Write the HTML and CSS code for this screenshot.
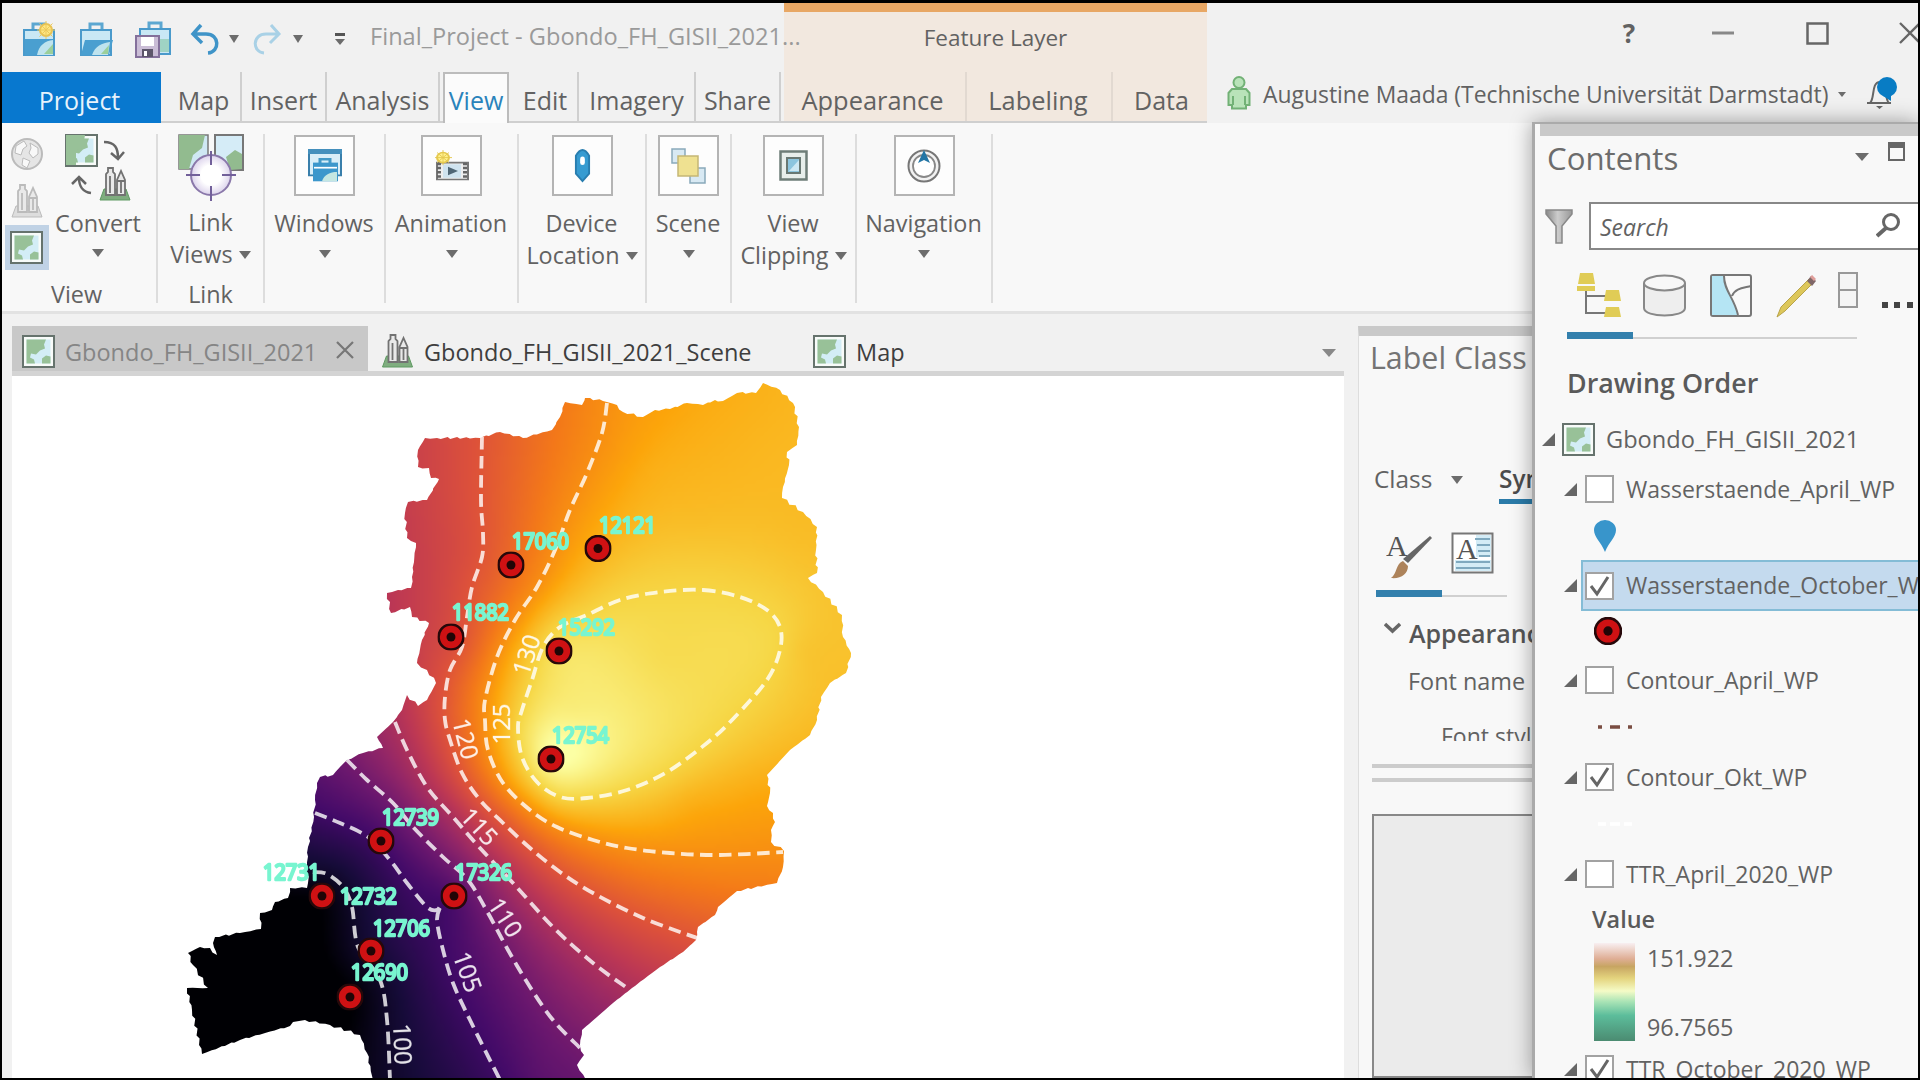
FILE: index.html
```html
<!DOCTYPE html>
<html lang="en">
<head>
<meta charset="utf-8">
<title>Final_Project - Gbondo_FH_GISII_2021</title>
<link rel="stylesheet" href="styles.css">
</head>
<body>
<svg class="defs" width="0" height="0" aria-hidden="true">
  <defs>
    <linearGradient id="grey" x1="0" x2="1"><stop offset="0" stop-color="#888"/><stop offset=".45" stop-color="#ccc"/><stop offset="1" stop-color="#999"/></linearGradient>
    <radialGradient id="lens"><stop offset=".5" stop-color="#fff"/><stop offset="1" stop-color="#dcd3ec"/></radialGradient>
    <symbol id="mapicon" viewBox="0 0 33 33">
      <rect x="1" y="1" width="31" height="31" fill="#f8fbf9" stroke="#66736d" stroke-width="2"/>
      <rect x="4.500" y="4.500" width="24" height="24" fill="#d3edf6"/>
      <path d="M4.500 4.500H24l-2 5 1 4-5 2-4 4-5-1-1 4 4 2 1 4H4.500zM20 28.500v-5l4-3 4.500 1v7z" fill="#98c198"/>
    </symbol>
    <symbol id="towers" viewBox="0 0 32 34">
      <path d="M5 22h22l4 11H1z" fill="var(--base,#7fad7f)" stroke="var(--rim,#5f9a62)"/>
      <path d="M7 28V7l2-2V1h5v4l2 2v21zM18 28V13l4-9 4 9v15zM18 14h8M11 9v17M22 15v11" fill="#e9e9e9" stroke="var(--line,#727272)" stroke-width="1.800"/>
    </symbol>
    <symbol id="case" viewBox="0 0 34 36">
      <path d="M11 10V3h12v7" fill="none" stroke="#5ca7d1" stroke-width="3"/>
      <rect x="2" y="9" width="30" height="25" fill="#c9e8f5" stroke="#4a9acb" stroke-width="2"/>
    </symbol>
    <symbol id="node" viewBox="0 0 26 26">
      <circle cx="13" cy="13" r="12" fill="#cf1113" stroke="#26080a" stroke-width="2.500"/>
      <circle cx="13" cy="13" r="4.300" fill="#210506"/>
    </symbol>
    <symbol id="tri" viewBox="0 0 13 13"><path d="M13 0v13H0z" fill="#666"/></symbol>
    <symbol id="check" viewBox="0 0 29 28"><path d="M6 14l6 8L23 5" fill="none" stroke="#666" stroke-width="3"/></symbol>
  </defs>
</svg>

<div class="app">
  <header class="head">
    <div class="head-left">
      <div class="quick">
        <svg class="q1" width="34" height="36" viewBox="0 0 34 36"><use href="#case"/><path d="M3 18h28v16H3z" fill="#4a9fd0"/><path d="M15 34c2-10 8-14 16-15v15z" fill="#bfe3ee"/><path d="M22 33l9-10v10z" fill="#9bcf9a"/><circle cx="24" cy="9" r="6" fill="#ffe680" stroke="#e8c253" stroke-width="2"/><path d="M24 0v18M15 9h18M17.500 2.500l13 13M30.500 2.500l-13 13" stroke="#ecc95c" stroke-width="1"/></svg>
        <svg class="q2" width="34" height="36" viewBox="0 0 34 36"><use href="#case"/><path d="M6 19h28l-4 15H2z" fill="#4a9fd0"/><path d="M13 34c3-9 10-12 18-13l-2 13z" fill="#bfe3ee"/><path d="M22 33l8-9-1 9z" fill="#9bcf9a"/></svg>
        <svg class="q3" width="37" height="38" viewBox="0 0 37 38"><svg x="3" width="34" height="36"><use href="#case"/></svg><path d="M25 19h9v13h-9z" fill="#9fd3c4"/><path d="M1 16h23v21H1z" fill="#cabdd6" stroke="#84709b" stroke-width="2"/><path d="M6 17h13v9H6z" fill="#fff"/><path d="M7 29h11v8H7z" fill="#5d566a"/><path d="M9 31h3v5H9z" fill="#fff"/></svg>
        <svg class="q4" width="30" height="32" viewBox="0 0 30 32"><path d="M11 2L3 11l9 9M4 11h12c14 0 14 18 2 19" fill="none" stroke="#3f94c8" stroke-width="3.500"/></svg>
        <i class="caret q5"></i>
        <svg class="q6" width="30" height="32" viewBox="0 0 30 32"><path d="M19 2l8 9-9 9M26 11H14c-14 0-14 18-2 19" fill="none" stroke="#a9d1e6" stroke-width="3"/></svg>
        <i class="caret q7"></i>
        <span class="custom"><i class="caret"></i></span>
        <span class="title">Final_Project - Gbondo_FH_GISII_2021...</span>
      </div>
      <nav class="tabs">
        <a class="project">Project</a><a class="t-map">Map</a><a class="t-ins">Insert</a><a class="t-ana">Analysis</a><a class="t-view">View</a><a class="t-edit">Edit</a><a class="t-img">Imagery</a><a class="t-share">Share</a>
      </nav>
    </div>
    <div class="context">
      <div class="context-name">Feature Layer</div>
      <nav class="context-tabs"><a>Appearance</a><a>Labeling</a><a>Data</a></nav>
    </div>
    <div class="head-right">
      <div class="window-buttons">
        <b>?</b>
        <svg width="22" height="22" viewBox="0 0 22 22"><path d="M0 11h22" stroke="#888" stroke-width="3"/></svg>
        <svg width="23" height="23" viewBox="0 0 23 23"><path d="M1.500 1.500h20v20h-20z" fill="none" stroke="#666" stroke-width="2.500"/></svg>
        <svg width="22" height="22" viewBox="0 0 22 22"><path d="M1 1l20 20M21 1L1 21" stroke="#666" stroke-width="2.300"/></svg>
      </div>
      <div class="account">
        <svg width="24" height="34" viewBox="0 0 24 34"><g fill="#b9e3b9" stroke="#72b176" stroke-width="2"><circle cx="12" cy="6.500" r="5.500"/><path d="M5 13h14l3.500 4v12H19v3.500H5V29H1.500V17zM6 20v9M18 20v9"/></g></svg>
        <span>Augustine Maada (Technische Universität Darmstadt)</span>
        <i class="caret small"></i>
        <svg width="33" height="34" viewBox="0 0 33 34"><path d="M1 27h24M4 27c5-4 1-21 10-21 8 0 4 17 9 21" fill="none" stroke="#666" stroke-width="2"/><path d="M10 30h7l-3.500 3z" fill="#666"/><circle cx="21" cy="11" r="10" fill="#087cc4"/><path d="M17 20h8v5z" fill="#087cc4"/></svg>
      </div>
    </div>
  </header>

  <section class="ribbon">
    <div class="group g-view">
      <div class="view-row">
        <div class="modes">
          <svg width="34" height="34" viewBox="0 0 34 34"><circle cx="17" cy="17" r="15" fill="#e5e5e5" stroke="#bbb" stroke-width="2"/><path d="M6 9l8-5 3 5-4 3-2 6-6-2zM20 6l8 5v6l-5 4-4-5 2-5zM13 21l7 3-3 7-5-3z" fill="#f8f8f8" stroke="#bbb"/></svg>
          <svg class="pale" width="32" height="34"><use href="#towers"/></svg>
          <span class="mode-on"><svg width="33" height="33"><use href="#mapicon"/></svg></span>
        </div>
        <div class="convert">
          <svg width="66" height="68" viewBox="0 0 66 68"><svg width="33" height="33"><use href="#mapicon"/><path d="M1 1h19l-2 12-7 4v14H1z" fill="#98c198"/></svg><path d="M39 8c11 0 14 6 14 16M46 19l7 6 6-7M26 59c-8-1-12-7-12-15M7 50l7-7 7 7" fill="none" stroke="#666" stroke-width="2.500"/><svg x="34" y="33" width="32" height="34"><use href="#towers"/></svg></svg>
          <span>Convert</span><i class="caret"></i>
        </div>
      </div>
      <span class="group-name">View</span>
    </div>
    <div class="group g-link">
      <svg width="66" height="68" viewBox="0 0 66 68"><path d="M1 1h29v34H1z" fill="#cfe8f3" stroke="#777" stroke-width="1.500"/><path d="M1 1h26l-3 13-9 7-4 14H1z" fill="#92bb8f"/><path d="M37 1h28v35H37z" fill="#d5ecf7" stroke="#777" stroke-width="2"/><path d="M52 36l-4-13 9-7 7 4v15z" fill="#92bb8f"/><circle cx="33" cy="41" r="20" fill="url(#lens)" stroke="#8a78aa" stroke-width="2"/><path d="M33 17v14M33 52v15M8 41h14M44 41h14" stroke="#72609a" stroke-width="2"/></svg>
      <span>Link</span><span>Views <i class="caret"></i></span><span class="group-name">Link</span>
    </div>
    <div class="group g-win"><div class="tile"><svg width="34" height="34" viewBox="0 0 34 40" preserveAspectRatio="none"><path d="M1 1h32v30H1z" fill="#d9eef8" stroke="#397fab" stroke-width="2"/><path d="M0 0h34v6H0z" fill="#4590bd"/><path d="M12 17v-5h10v5" fill="none" stroke="#4499c6" stroke-width="3"/><path d="M5 16h25v22H5z" fill="#3c97cc"/><path d="M6 22h23" stroke="#fff" stroke-width="2"/><path d="M14 38c2-8 8-11 15-11v11z" fill="#c5e7e2"/></svg></div><span>Windows</span><i class="caret"></i></div>
    <div class="group g-anim"><div class="tile"><svg width="34" height="32" viewBox="0 0 34 38" preserveAspectRatio="none"><path d="M2 15h31v20H2z" fill="#eee" stroke="#777" stroke-width="2"/><path d="M4 15v20M30 15v20" stroke="#666" stroke-width="4" stroke-dasharray="3 2"/><path d="M8 17h18v16H8z" fill="#cfe3ef"/><path d="M13 20l10 5-10 5z" fill="#4f6675"/><circle cx="8" cy="9" r="6" fill="#fff18c" stroke="#e5c84e" stroke-width="2"/><path d="M8 0v18M0 9h17M2 3l12 12M14 3L2 15" stroke="#e5c84e"/></svg></div><span>Animation</span><i class="caret"></i></div>
    <div class="group g-device"><div class="tile"><svg width="17" height="34" viewBox="0 0 18 36"><path d="M2 7q7-12 14 0v19l-7 8-7-8z" fill="#369bd1" stroke="#287daf" stroke-width="2"/><rect x="6.500" y="8" width="5" height="9" rx="2.500" fill="#fff"/></svg></div><span>Device</span><span>Location <i class="caret"></i></span></div>
    <div class="group g-scene"><div class="tile"><svg width="35" height="36" viewBox="0 0 35 36"><path d="M1 1h13v14H1zM19 20h15v15H19z" fill="#d8e9f3" stroke="#89a9bb" stroke-width="1.500"/><path d="M7 8h20v20H7z" fill="#efe191" stroke="#c5b675" stroke-width="1.500"/></svg></div><span>Scene</span><i class="caret"></i></div>
    <div class="group g-clip"><div class="tile"><svg width="29" height="31" viewBox="0 0 29 31"><path d="M1.500 1.500h26v28h-26z" fill="#e7eeeb" stroke="#6e7d78" stroke-width="2.500"/><path d="M8 8h13v15H8z" fill="#8cc5de" stroke="#687873" stroke-width="2"/><path d="M10 21l10-11v11z" fill="#cde8f3"/></svg></div><span>View</span><span>Clipping <i class="caret"></i></span></div>
    <div class="group g-nav"><div class="tile"><svg width="34" height="34" viewBox="0 0 34 34"><circle cx="17" cy="17" r="15.500" fill="#f2f2f2" stroke="#777" stroke-width="2"/><circle cx="17" cy="17" r="11" fill="#fff" stroke="#888" stroke-width="1.800"/><path d="M17 1l6 13-6-3-6 3z" fill="#2375a5"/></svg></div><span>Navigation</span><i class="caret"></i></div>
  </section>

  <main class="work">
    <section class="documents">
      <div class="doc-tabs">
        <div class="doc active"><svg width="33" height="33"><use href="#mapicon"/></svg><span>Gbondo_FH_GISII_2021</span><svg class="close" width="18" height="18" viewBox="0 0 18 18"><path d="M1 1l16 16M17 1L1 17" stroke="#777" stroke-width="2.200"/></svg></div>
        <div class="doc scene"><svg width="33" height="34"><use href="#towers"/></svg><span>Gbondo_FH_GISII_2021_Scene</span></div>
        <div class="doc plain"><svg width="33" height="33"><use href="#mapicon"/></svg><span>Map</span></div>
        <i class="caret wide"></i>
      </div>
      <div class="map">
        <canvas id="surface" width="1332" height="702"></canvas>
        <svg class="layers" width="1332" height="702" viewBox="12 376 1332 702">
          <g id="contours" class="contours"></g>
          <g class="levels">
            <text transform="translate(527 655) rotate(-72)" y="8">130</text>
            <text transform="translate(502 724) rotate(-90)" y="8">125</text>
            <text transform="translate(465 739) rotate(76)" y="8">120</text>
            <text transform="translate(479 827) rotate(47)" y="8">115</text>
            <text transform="translate(505 918) rotate(57)" y="8">110</text>
            <text transform="translate(467 972) rotate(70)" y="8">105</text>
            <text transform="translate(402 1044) rotate(88)" y="8">100</text>
          </g>
          <g id="wells" class="wells"></g>
        </svg>
      </div>
    </section>

    <aside class="label-pane">
      <h2>Label Class</h2>
      <div class="label-tabs"><span>Class <i class="caret"></i></span><b>Symbol</b></div>
      <div class="label-icons">
        <svg width="48" height="50" viewBox="0 0 48 50"><text x="0" y="24" class="serif-a">A</text><path d="M46 6L22 31l-5-4L44 4z" fill="#666"/><path d="M17 29l5 5c0 8-7 13-17 12 6-4 5-15 12-17z" fill="#ad835b"/></svg>
        <svg width="43" height="42" viewBox="0 0 43 42"><path d="M1.500 1.500h40v39h-40z" fill="#fff" stroke="#777" stroke-width="2"/><path d="M25 3h15v22H25zM4 28h36v11H4z" fill="#d4ecf6"/><path d="M24 7h15M26 13h13M27 19h12M28 24h11M5 30h34M5 36h34" stroke="#7fa9bf" stroke-width="1.800"/><text x="5" y="27" class="serif-a">A</text></svg>
      </div>
      <div class="rule"><i></i></div>
      <div class="appearance"><svg width="17" height="12" viewBox="0 0 17 12"><path d="M1 2l7.500 7L16 2" fill="none" stroke="#666" stroke-width="3.500"/></svg><b>Appearance</b></div>
      <div class="font-name">Font name</div>
      <div class="font-style">Font style</div>
      <div class="splitter"></div>
      <div class="preview"></div>
    </aside>
  </main>

  <aside class="contents">
    <div class="grip"></div>
    <div class="contents-head"><h2>Contents</h2><i class="caret wide"></i><svg width="17" height="19" viewBox="0 0 17 19"><path d="M1 1h15v17H1z" fill="none" stroke="#666" stroke-width="2"/><path d="M0 0h17v6H0z" fill="#666"/></svg></div>
    <div class="find">
      <svg width="28" height="35" viewBox="0 0 28 35"><path d="M1 1h26v4L17 17v17h-6V17L1 5z" fill="url(#grey)" stroke="#888" stroke-width="1.500"/></svg>
      <div class="search"><em>Search</em><svg width="25" height="25" viewBox="0 0 25 25"><circle cx="15" cy="9" r="7.500" fill="none" stroke="#666" stroke-width="3"/><path d="M10 15l-9 8" stroke="#666" stroke-width="4"/></svg></div>
    </div>
    <div class="modes-bar">
      <svg width="46" height="46" viewBox="0 0 46 46"><path d="M9 16v25h20M9 24h20" fill="none" stroke="#777" stroke-width="2"/><path d="M3 1h13l2 11H1zM0 14h18v5H0zM29 18h13l2 11H27zM29 35h13l2 10H27z" fill="#e0cc56"/></svg>
      <svg width="43" height="43" viewBox="0 0 43 43"><path d="M1 9v25c0 10 41 10 41 0V9" fill="#eee" stroke="#888" stroke-width="2"/><ellipse cx="21.500" cy="9" rx="20.500" ry="7.500" fill="#f7f7f7" stroke="#888" stroke-width="2"/></svg>
      <svg width="42" height="43" viewBox="0 0 42 43"><rect x="1" y="1" width="40" height="41" rx="2" fill="#f9f9f9" stroke="#777" stroke-width="2"/><path d="M2 2h12c0 15 10 21 14 39H2z" fill="#b5e5f4"/><path d="M14 2c0 15 10 21 14 39M22 22c3-8 12-8 19-10" fill="none" stroke="#777" stroke-width="2"/></svg>
      <svg width="40" height="44" viewBox="0 0 40 44"><path d="M33 4l4 4L9 36l-8 6 4-10z" fill="#ddc75a" stroke="#b8a34a"/><path d="M31 6l4-5 5 5-4 5z" fill="#7f6768"/><path d="M35 1l4 4" stroke="#df9e9a" stroke-width="3"/></svg>
      <svg width="20" height="36" viewBox="0 0 20 36"><path d="M1 1h18v34H1zM1 18h18" fill="#f5f5f5" stroke="#999" stroke-width="2"/></svg>
      <svg class="dots" width="33" height="6" viewBox="0 0 33 6"><path d="M0 0h6v6H0zM12 0h6v6h-6zM25 0h6v6h-6z" fill="#444"/></svg>
    </div>
    <div class="rule"><i></i></div>
    <h3>Drawing Order</h3>
    <div class="tree">
      <div class="row root"><svg width="13" height="13"><use href="#tri"/></svg><svg width="33" height="33"><use href="#mapicon"/></svg><span>Gbondo_FH_GISII_2021</span></div>
      <div class="row"><svg width="13" height="13"><use href="#tri"/></svg><i class="box"></i><span>Wasserstaende_April_WP</span></div>
      <div class="symbol s-pin"><svg width="22" height="32" viewBox="0 0 22 32"><path d="M11 32C7 22 0 17 0 10a11 10 0 0 1 22 0c0 7-7 12-11 22z" fill="#3895cb"/></svg></div>
      <div class="row selected"><svg width="13" height="13"><use href="#tri"/></svg><div class="hit"><i class="box"><svg width="29" height="28"><use href="#check"/></svg></i><span>Wasserstaende_October_WP</span></div></div>
      <div class="symbol s-dot"><svg width="28" height="28"><use href="#node"/></svg></div>
      <div class="row"><svg width="13" height="13"><use href="#tri"/></svg><i class="box"></i><span>Contour_April_WP</span></div>
      <div class="symbol s-line"><svg width="34" height="4" viewBox="0 0 34 4"><path d="M0 2h4M12 2h10M30 2h4" stroke="#7a4d42" stroke-width="3.500"/></svg></div>
      <div class="row"><svg width="13" height="13"><use href="#tri"/></svg><i class="box"><svg width="29" height="28"><use href="#check"/></svg></i><span>Contour_Okt_WP</span></div>
      <div class="symbol s-line"><svg width="34" height="4" viewBox="0 0 34 4"><path d="M0 2h8M12 2h10M26 2h8" stroke="#fff" stroke-width="3.500"/></svg></div>
      <div class="row"><svg width="13" height="13"><use href="#tri"/></svg><i class="box"></i><span>TTR_April_2020_WP</span></div>
      <b class="value">Value</b>
      <div class="legend"><i class="ramp"></i><div><span>151.922</span><span>96.7565</span></div></div>
      <div class="row last"><svg width="13" height="13"><use href="#tri"/></svg><i class="box"><svg width="29" height="28"><use href="#check"/></svg></i><span>TTR_October_2020_WP</span></div>
    </div>
  </aside>
</div>
<script src="map.js"></script>
</body>
</html>
```
FILE: styles.css
```css
* { box-sizing: border-box; }
html, body { height: 100%; }
body { margin: 0; background: #000; overflow: hidden; color: #626262; font: 23px/30px "Open Sans", "Noto Sans", sans-serif; white-space: nowrap; }
svg { display: block; flex: none; }
.defs { position: absolute; }
h2, h3 { margin: 0; font-weight: 400; }
.app { position: relative; width: 1916px; height: 1075px; margin: 3px 2px 2px; background: #f1f1f1; overflow: hidden; display: flex; flex-direction: column; }
.caret { display: inline-block; flex: none; width: 0; height: 0; border: 6px solid transparent; border-top: 8px solid #6c6c6c; border-bottom: 0; vertical-align: 4px; }
.caret.wide { border-width: 8px 7px 0; }
.caret.small { border-width: 5px 4px 0; }

.head { display: grid; grid-template-columns: 782px 423px 1fr; height: 120px; flex: none; border-bottom: 2px solid #cfcfcf; }
.head-left { display: grid; grid-template-rows: 69px 51px; z-index: 1; }
.quick { display: flex; align-items: center; padding: 3px 0 0 20px; }
.q2 { margin-left: 23px; } .q3 { margin-left: 22px; } .q4 { margin-left: 18px; } .q5 { margin-left: 9px; } .q6 { margin-left: 13px; } .q7 { margin-left: 11px; }
.caret.q5, .caret.q7 { border-left-width: 5px; border-right-width: 5px; }
.custom { margin-left: 32px; padding-top: 3px; border-top: 3px solid #555; display: flex; }
.custom .caret { border-width: 6px 5px 0; }
.title { margin: -7px 0 0 25px; color: #9a9a9a; font-size: 23.6px; }
.tabs { display: flex; }
.tabs a, .context-tabs a { display: flex; justify-content: center; align-items: center; padding-top: 8px; border-right: 2px solid #cfcfcf; font-size: 25px; height: 49px; padding-bottom: 2px; }
.tabs a { flex: none; }
.tabs .project { width: 159px; background: #0878cf; color: #e7f3fc; border: 0; height: 51px; padding: 9px 4px 5px 0; }
.tabs .t-map { width: 81px; padding-left: 6px; } .t-ins { width: 85px; } .t-ana { width: 113px; }
.tabs .t-view { width: 66px; margin: 0 4px 0 3px; background: #fbfbfb; border: 2px solid #bcbcbc; border-bottom: 0; height: 51px; padding: 6px 0 4px; color: #2a83bb; }
.t-edit { width: 66px; } .t-img { width: 117px; } .t-share { width: 85px; }
.context { background: #f2e8df; border-top: 9px solid #e8a764; display: flex; flex-direction: column; height: 118px; }
.context-name { height: 60px; padding-top: 11px; text-align: center; font-size: 22.5px; }
.context-tabs { display: grid; grid-template-columns: 183px 146px 1fr; }
.context-tabs a { border-color: #e2d9d1; }
.context-tabs a:first-child { padding-right: 4px; font-size: 25.4px; }
.context-tabs a:nth-child(2) { font-size: 25.4px; padding-right: 2px; }
.context-tabs a:last-child { border: 0; padding-left: 3px; }
.head-right { display: grid; grid-template-rows: 62px 56px; background: #f1f1f1; }
.window-buttons { display: flex; align-items: center; padding: 0 0 2px 414px; }
.window-buttons b { width: 16px; font-size: 26px; text-align: center; margin-right: 75px; }
.window-buttons svg + svg { margin-left: 72px; }
.window-buttons svg:last-child { margin-left: 70px; }
.account { display: flex; align-items: center; padding-left: 20px; }
.account span { margin: 3px 10px 0 12px; width: 565px; font-size: 22.9px; }
.account .caret { margin-top: 2px; }
.account svg:last-child { margin-left: 20px; }

.ribbon { height: 191px; flex: none; display: flex; padding-top: 11px; background: #f8f8f8; border-bottom: 3px solid #e2e2e2; font-size: 23.4px; }
.group { height: 169px; border-right: 2px solid #ddd; display: flex; flex-direction: column; align-items: center; flex: none; }
.g-view { width: 156px; } .g-link { width: 107px; } .g-win { width: 121px; } .g-anim { width: 133px; } .g-device { width: 128px; } .g-scene { width: 85px; } .g-clip { width: 125px; } .g-nav { width: 136px; }
.group > span { height: 32px; line-height: 32px; }
.g-link > svg { margin-bottom: 4px; }
.group > .group-name { margin-top: 8px; }
.group > .caret, .convert > .caret { margin-top: 11px; }
.tile { width: 61px; height: 61px; margin: 1px 0 11px; border: 2px solid #b4b4b4; background: #fdfdfd; display: grid; place-items: center; flex: none; }
.group > .tile + span { margin-left: -1px; }
.view-row { width: 100%; display: flex; height: 136px; }
.modes { width: 49px; display: flex; flex-direction: column; align-items: center; gap: 13px; padding-top: 3px; flex: none; }
.pale { --base: #ddd; --rim: #bbb; --line: #bbb; }
.mode-on { width: 44px; height: 45px; margin-top: -6px; background: #c0d2e5; display: grid; place-items: center; flex: none; }
.convert { width: 94px; display: flex; flex-direction: column; align-items: center; line-height: 34px; }
.convert svg { margin-bottom: 4px; } .convert > svg { height: 68px; }
.convert > span { height: 32px; }
.g-view > .group-name { margin: 8px 5px 0 0; }

.work { flex: 1; display: flex; min-height: 0; }
.documents { width: 1342px; flex: none; padding: 12px 0 0 10px; }
.doc-tabs { height: 50px; display: flex; border-bottom: 5px solid #d4d4d4; font-size: 23.5px; }
.doc { display: flex; align-items: center; padding-top: 5px; color: #3e3e3e; }
.doc.active { width: 356px; background: #c8c8c8; color: #858585; padding-left: 10px; }
.doc span { margin: 2px 0 0 10px; }
.doc .close { margin: -3px 0 0 19px; }
.doc.scene { width: 445px; padding-left: 13px; } .doc.plain { width: 509px; }
.doc-tabs .caret { margin-top: 23px; border-top-color: #888; }
.map { position: relative; height: 702px; background: #fff; }
.map canvas { display: block; }
.layers { position: absolute; inset: 0; }
.contours { fill: none; stroke: #fff; stroke-opacity: .8; stroke-width: 3.800; stroke-dasharray: 12.500 6.500; }
.levels text { font: 24px "Open Sans", sans-serif; text-anchor: middle; fill: #fff; fill-opacity: .88; stroke: #fff; stroke-opacity: .4; stroke-width: .7; }
.wells text { font: 22px "Open Sans", sans-serif; fill: #78f5d0; stroke: #78f5d0; stroke-width: 2.600; stroke-linejoin: round; }

.label-pane { margin: 12px 0 0 14px; border-left: 1px solid #ddd; border-top: 10px solid #c9c9c9; background: #f8f8f8; flex: 1; padding-left: 13px; display: flex; flex-direction: column; }
.label-pane h2 { font-size: 30.4px; height: 124px; padding-top: 7px; margin-left: -2px; color: #747474; flex: none; }
.label-tabs { display: flex; height: 46px; line-height: 38px; padding-left: 2px; font-size: 24.4px; flex: none; }
.label-tabs span { width: 125px; } .label-tabs .caret { margin-left: 12px; }
.label-tabs b { color: #4c4c4c; font-weight: 600; height: 44px; border-bottom: 5px solid #2b7ba9; }
.label-icons { display: flex; gap: 17px; height: 84px; padding: 26px 0 0 14px; flex: none; }
.serif-a { font: 30px "Liberation Serif", serif; fill: #555; }
.rule { height: 7px; border-bottom: 2px solid #d0d0d0; flex: none; }
.rule i { display: block; height: 7px; width: 66px; background: #3380ad; }
.label-pane .rule { width: 131px; margin-left: 4px; }
.appearance { display: flex; height: 72px; padding: 23px 0 0 12px; gap: 8px; line-height: 26px; flex: none; }
.appearance svg { margin-top: 2px; }
.appearance b { font-weight: 600; color: #555; font-size: 25px; }
.font-name { padding-left: 36px; height: 54px; flex: none; line-height: 24px; font-size: 23.4px; }
.font-style { padding-left: 69px; height: 18px; flex: none; line-height: 27px; overflow: hidden; }
.splitter { height: 18px; margin-top: 23px; border: solid #ccc; border-width: 4px 0; flex: none; }
.preview { margin-top: 32px; flex: 1; background: #ebebeb; border: 2px solid #888; }

.contents { position: absolute; left: 1530px; top: 119px; width: 386px; height: 956px; background: #f8f8f8; border-left: 3px solid #aaa; border-top: 2px solid #aaa; box-shadow: 0 0 20px rgba(0,0,0,.36); padding-left: 3px; }
.grip { height: 12px; margin-left: 2px; background: #c9c9c9; }
.contents-head { display: flex; height: 66px; padding: 5px 0 0 9px; }
.contents-head h2 { width: 308px; font-size: 31.2px; line-height: 34px; color: #6c6c6c; }
.contents-head .caret { margin-top: 12px; }
.contents-head svg { margin-left: 19px; margin-top: 1px; }
.find { display: flex; align-items: center; height: 48px; padding-left: 7px; }
.search { margin-left: 16px; flex: 1; height: 48px; background: #fff; border: 2px solid #888; border-right: 0; display: flex; justify-content: space-between; align-items: center; padding: 2px 17px 0 9px; }
.search svg { margin-top: -4px; }
.modes-bar { display: flex; height: 82px; padding: 22px 0 0 39px; }
.modes-bar svg:nth-child(2) { margin: 2px 0 0 20px; } .modes-bar svg:nth-child(3) { margin: 2px 0 0 24px; } .modes-bar svg:nth-child(4) { margin: 3px 0 0 24px; } .modes-bar svg:nth-child(5) { margin-left: 22px; }
.modes-bar .dots { margin: 30px 0 0 24px; }
.contents .rule { width: 290px; margin-left: 29px; }
.contents h3 { padding: 29px 0 0 29px; height: 79px; font-weight: 600; font-size: 26.8px; color: #5a5a5a; line-height: 30px; }
.tree { padding-left: 26px; display: flex; flex-direction: column; }
.row { display: flex; align-items: center; height: 46px; flex: none; }
.row > svg:first-child { margin-right: 8px; }
.row.root { margin: 0 0 5px -22px; height: 43px; font-size: 23.6px; }
.root svg + svg { margin-right: 11px; margin-left: -1px; }
.box { width: 29px; height: 28px; border: 2px solid #a2a2a2; background: #fff; margin-right: 12px; flex: none; }
.box svg { margin: -2px; }
.row span { margin-top: -1px; }
.symbol { height: 48px; flex: none; padding-left: 30px; }
.s-pin { padding-top: 8px; height: 48px; }
.row.selected { height: 51px; }
.row.selected > svg { margin-right: 4px; }
.hit { display: flex; align-items: center; align-self: stretch; flex: 1; background: #c4daee; border: 2px solid #84bcd6; border-right: 0; padding-left: 2px; overflow: hidden; }
.s-dot { padding-top: 6px; height: 46px; } .s-line { height: 51px; padding: 22px 0 0 34px; }
.value { height: 46px; font-weight: 600; color: #5a5a5a; padding: 7px 0 0 28px; flex: none; font-size: 23.4px; }
.legend { display: flex; height: 103px; padding-left: 30px; flex: none; }
.ramp { width: 41px; height: 98px; background: linear-gradient(#f8eff1, #dfae95 16%, #c7a562 24%, #e4d47e 36%, #f5fbc7 49%, #a8e3b5 60%, #5cbd9b 74%, #4b8b71); }
.legend div { display: flex; flex-direction: column; justify-content: space-between; height: 99px; margin-left: 12px; font-size: 23.4px; }
```
FILE: map.js
```js
const LEFT = 12, TOP = 376;
const BASIN = [[425,438],[418,450],[418,467],[429,468],[431,478],[439,479],[427,500],[408,502],[405,513],[407,538],[416,543],[412,577],[411,588],[398,590],[387,593],[391,613],[410,607],[412,617],[429,623],[422,640],[417,663],[427,670],[436,683],[427,700],[418,706],[407,695],[402,710],[393,722],[377,737],[383,748],[363,753],[347,760],[340,767],[333,775],[320,777],[317,783],[315,800],[314,817],[308,847],[307,867],[308,883],[307,888],[290,888],[288,898],[275,902],[272,910],[260,913],[261,929],[240,933],[215,937],[213,943],[217,955],[210,948],[200,947],[188,953],[193,965],[208,988],[187,988],[192,1010],[202,1054],[240,1040],[290,1026],[293,1022],[305,1020],[330,1025],[360,1035],[367,1053],[373,1080],[586,1080],[577,1065],[584,1055],[580,1045],[582,1030],[597,1017],[613,1003],[632,988],[660,967],[683,952],[696,940],[698,927],[715,915],[718,907],[737,891],[777,883],[783,867],[784,851],[771,842],[771,830],[775,822],[773,813],[767,806],[770,793],[767,775],[790,750],[810,735],[817,720],[821,697],[830,683],[846,673],[851,653],[843,637],[842,615],[823,592],[808,578],[817,573],[816,550],[817,527],[803,512],[782,498],[783,487],[789,465],[787,452],[797,445],[799,427],[793,403],[780,390],[763,383],[756,393],[737,393],[723,401],[715,400],[703,405],[687,403],[670,409],[655,410],[643,417],[623,412],[617,405],[603,401],[585,398],[582,405],[565,402],[560,417],[552,430],[523,438],[500,432],[480,438],[437,438]];
const LINES = [
  { v: 130, closed: true, p: [[703,590],[740,597],[767,610],[780,627],[780,650],[767,680],[733,719],[707,743],[667,772],[627,790],[587,798],[560,797],[537,782],[522,757],[518,727],[522,710],[532,680],[543,647],[560,627],[587,615],[620,600],[660,592]] },
  { v: 125, p: [[607,403],[602,433],[587,473],[570,510],[555,550],[537,587],[515,620],[497,657],[485,700],[485,720],[488,750],[503,783],[530,810],[557,827],[593,840],[627,848],[670,853],[720,855],[783,852]] },
  { v: 120, p: [[482,437],[481,500],[483,533],[482,557],[472,587],[467,617],[462,647],[450,670],[445,697],[445,720],[450,740],[462,773],[480,800],[503,823],[530,848],[560,872],[593,893],[643,918],[697,938]] },
  { v: 115, p: [[395,722],[407,750],[427,787],[453,817],[480,848],[513,883],[553,927],[593,963],[630,990]] },
  { v: 110, p: [[347,760],[367,780],[393,803],[413,827],[443,857],[468,880],[488,913],[508,950],[530,987],[553,1020],[580,1048]] },
  { v: 105, p: [[315,813],[340,823],[368,837],[390,860],[407,883],[427,907],[437,910],[441,905],[437,920],[443,950],[453,983],[470,1020],[500,1080]] },
  { v: 100, p: [[313,872],[327,874],[343,887],[352,907],[358,947],[380,980],[387,1020],[390,1080]] }
];
const SPOTS = [[551,757,134.6],[575,715,132.8],[598,680,132.2],[559,651,131.3],[660,660,130.8],[800,650,129],[846,655,128.6],[770,450,127.8],[770,400,127.5],[680,420,126.8],[800,540,128.3],[700,520,128.2],[650,470,127.1],[755,790,126.9],[690,800,127.4],[410,515,117.3],[395,602,116.4],[425,450,118],[430,650,118.2],[322,896,97.5],[350,997,96.8],[260,960,95],[200,970,94],[215,1040,94],[300,1000,95.5],[580,1068,109.2],[540,1078,107.7],[440,1078,102.2]];
const WELLS = [[598,548.5,'12121',599,533],[511,565,'17060',512,549],[451,637,'11882',452,620],[559,651,'15292',558,635],[551,759,'12754',552,743],[381,841,'12739',382,825],[322,896,'12731',263,880],[454,896,'17326',455,880],[371,951,'12706',373,936],[350,997,'12690',351,980]];
const RAMP = [[0,0,4],[22,11,57],[66,10,104],[106,23,110],[147,38,103],[188,55,84],[221,81,58],[243,120,25],[252,165,10],[246,215,70],[252,255,164]];
const STOPS = [[97,0],[100,.07],[105,.19],[110,.32],[115,.46],[120,.61],[125,.75],[127,.815],[130,.895],[132,.94],[134.5,1]];

// Catmull-Rom curve through the vertices
function curve(p, closed) {
  const n = p.length, at = i => closed ? p[(i + n) % n] : p[Math.max(0, Math.min(n - 1, i))];
  let d = `M${p[0]}`;
  for (let i = 0; i < (closed ? n : n - 1); i++) {
    const a = at(i - 1), b = at(i), c = at(i + 1), e = at(i + 2);
    d += `C${b[0] + (c[0] - a[0]) / 6},${b[1] + (c[1] - a[1]) / 6} ${c[0] - (e[0] - b[0]) / 6},${c[1] - (e[1] - b[1]) / 6} ${c}`;
  }
  return d;
}
document.getElementById('contours').innerHTML = LINES.map(l => `<path d="${curve(l.p, l.closed)}"/>`).join('');
document.getElementById('wells').innerHTML =
  WELLS.map(w => `<use href="#node" x="${w[0] - 13.5}" y="${w[1] - 13.5}" width="27" height="27"/>`).join('') +
  [...WELLS, [0, 0, '12732', 340, 904]].map(w => `<text x="${w[3]}" y="${w[4]}" textLength="57" lengthAdjust="spacingAndGlyphs">${w[2]}</text>`).join('');

// Thin-plate spline through contour vertices and spot values
const S = 100, pts = [...SPOTS.map(s => [s[0] / S, s[1] / S, s[2]])];
for (const l of LINES) for (const q of l.p) pts.push([q[0] / S, q[1] / S, l.v]);
const n = pts.length, N = n + 3, M = [];
const U = r2 => r2 > 0 ? r2 * Math.log(r2) : 0;
for (let i = 0; i < n; i++) {
  const row = pts.map(q => U((pts[i][0] - q[0]) ** 2 + (pts[i][1] - q[1]) ** 2));
  row[i] += .012;
  M.push([...row, 1, pts[i][0], pts[i][1], pts[i][2]]);
}
M.push([...pts.map(() => 1), 0, 0, 0, 0], [...pts.map(q => q[0]), 0, 0, 0, 0], [...pts.map(q => q[1]), 0, 0, 0, 0]);
for (let c = 0; c < N; c++) {
  let b = c;
  for (let r = c + 1; r < N; r++) if (Math.abs(M[r][c]) > Math.abs(M[b][c])) b = r;
  [M[c], M[b]] = [M[b], M[c]];
  for (let r = 0; r < N; r++) {
    if (r === c) continue;
    const f = M[r][c] / M[c][c];
    for (let k = c; k <= N; k++) M[r][k] -= f * M[c][k];
  }
}
const W = M.map((r, i) => r[N] / r[i]);
function height(x, y) {
  x /= S; y /= S;
  let v = W[n] + W[n + 1] * x + W[n + 2] * y;
  for (let i = 0; i < n; i++) v += W[i] * U((x - pts[i][0]) ** 2 + (y - pts[i][1]) ** 2);
  return v;
}
function colour(v) {
  let t = v <= 97 ? 0 : 1;
  for (let i = 1; i < STOPS.length; i++) if (v > STOPS[i - 1][0] && v <= STOPS[i][0])
    t = STOPS[i - 1][1] + (v - STOPS[i - 1][0]) / (STOPS[i][0] - STOPS[i - 1][0]) * (STOPS[i][1] - STOPS[i - 1][1]);
  const k = Math.min(9, Math.floor(t * 10)), f = t * 10 - k;
  return RAMP[k].map((c, j) => c + (RAMP[k + 1][j] - c) * f);
}
const step = 4, x0 = 180, y0 = 376, gw = 172, gh = 177;
const cell = document.createElement('canvas');
cell.width = gw; cell.height = gh;
const cg = cell.getContext('2d'), img = cg.createImageData(gw, gh);
for (let j = 0; j < gh; j++) for (let i = 0; i < gw; i++) {
  const c = colour(height(x0 + (i + .5) * step, y0 + (j + .5) * step)), o = (j * gw + i) * 4;
  img.data[o] = c[0]; img.data[o + 1] = c[1]; img.data[o + 2] = c[2]; img.data[o + 3] = 255;
}
cg.putImageData(img, 0, 0);
const g = document.getElementById('surface').getContext('2d');
g.translate(-LEFT, -TOP);
g.beginPath();
BASIN.forEach((q, i) => {
  const b = BASIN[(i + 1) % BASIN.length], len = Math.hypot(b[0] - q[0], b[1] - q[1]), parts = Math.max(1, Math.round(len / 5));
  for (let k = 0; k < parts; k++) {
    const w = k ? Math.sin(i * 7.3 + k * 2.9) * 1.1 : 0;
    g.lineTo(q[0] + (b[0] - q[0]) * k / parts + w, q[1] + (b[1] - q[1]) * k / parts - w);
  }
});
g.closePath();
g.clip();
g.imageSmoothingQuality = 'high';
g.drawImage(cell, x0, y0, gw * step, gh * step);
```
